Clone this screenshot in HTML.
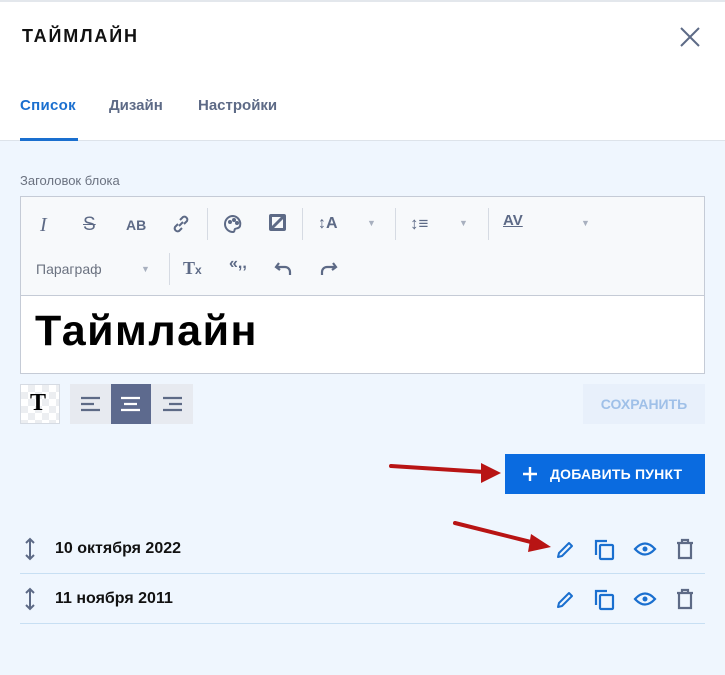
<!DOCTYPE html>
<html><head><meta charset="utf-8"><style>
*{margin:0;padding:0;box-sizing:border-box}
body{width:725px;height:675px;background:#eff6fe;font-family:"Liberation Sans",sans-serif;position:relative;overflow:hidden}
.a{position:absolute}
.hdr{left:0;top:0;width:725px;height:141px;background:#fff;border-top:2px solid #e3e7ec;border-bottom:1px solid #dde3ea}
.tb{font-size:15px;font-weight:bold;color:#5d6a86}
svg{position:absolute}
</style></head><body>
<div class="a hdr"></div>
<div class="a" style="left:22px;top:26px;font-size:18px;font-weight:bold;letter-spacing:1.8px;color:#111">ТАЙМЛАЙН</div>
<svg style="left:679px;top:26px" width="22" height="22"><path d="M2 2L20 20M20 2L2 20" stroke="#5d6a86" stroke-width="2"/></svg>
<div class="a tb" style="left:20px;top:97px;color:#1a6fcf;letter-spacing:0.3px">Список</div>
<div class="a tb" style="left:109px;top:97px">Дизайн</div>
<div class="a tb" style="left:198px;top:97px">Настройки</div>
<div class="a" style="left:20px;top:138px;width:58px;height:3px;background:#1a6fcf"></div>

<div class="a" style="left:20px;top:173px;font-size:13px;color:#6b7280">Заголовок блока</div>
<div class="a" style="left:20px;top:196px;width:685px;height:178px;border:1px solid #c5cbd6;background:#f7f9fb"></div>
<div class="a" style="left:21px;top:295px;width:683px;height:78px;background:#fff;border-top:1px solid #c5cbd6"></div>
<div class="a" style="left:35px;top:307px;font-size:43px;font-weight:bold;color:#000;letter-spacing:1.5px">Таймлайн</div>

<div class="a" style="left:40px;top:214px;font:italic 20px 'Liberation Serif',serif;color:#5d6a86">I</div>
<div class="a" style="left:83px;top:214px;font-size:19px;color:#5d6a86;text-decoration:line-through">S</div>
<div class="a" style="left:126px;top:217px;font-size:14px;font-weight:bold;color:#5d6a86">AB</div>
<svg style="left:170px;top:213px" width="22" height="22" fill="none" stroke="#5d6a86" stroke-width="2"><path d="M9 13l4-4M8 11l-3 3a3 3 0 004 4l3-3M14 11l3-3a3 3 0 00-4-4l-3 3"/></svg>
<div class="a" style="left:207px;top:208px;width:1px;height:32px;background:#d6dbe3"></div>
<svg style="left:222px;top:213px" width="22" height="22" fill="none" stroke="#5d6a86" stroke-width="2"><path d="M11 3a8 8 0 100 16c2 0 1-2 2-3s4 0 5-3a8 8 0 00-7-10z"/><circle cx="8" cy="9" r="1"/><circle cx="12" cy="7" r="1"/><circle cx="15" cy="10" r="1"/></svg>
<svg style="left:268px;top:213px" width="20" height="20"><rect x="1" y="1" width="17" height="17" rx="2" fill="#5d6a86"/><rect x="4" y="4" width="11" height="11" fill="#f7f9fb"/><path d="M4 15L15 4" stroke="#5d6a86" stroke-width="3"/></svg>
<div class="a" style="left:302px;top:208px;width:1px;height:32px;background:#d6dbe3"></div>
<div class="a" style="left:318px;top:215px;font-size:16px;font-weight:bold;color:#5d6a86">↕A</div>
<div class="a" style="left:367px;top:218px;font-size:9px;color:#a8b0bf">▼</div>
<div class="a" style="left:395px;top:208px;width:1px;height:32px;background:#d6dbe3"></div>
<div class="a" style="left:410px;top:214px;font-size:17px;font-weight:bold;color:#5d6a86">↕≡</div>
<div class="a" style="left:459px;top:218px;font-size:9px;color:#a8b0bf">▼</div>
<div class="a" style="left:488px;top:208px;width:1px;height:32px;background:#d6dbe3"></div>
<div class="a" style="left:503px;top:212px;font-size:15px;font-weight:bold;color:#5d6a86;text-decoration:underline">AV</div>
<div class="a" style="left:581px;top:218px;font-size:9px;color:#a8b0bf">▼</div>
<div class="a" style="left:36px;top:261px;font-size:14px;color:#6b7280">Параграф</div>
<div class="a" style="left:141px;top:264px;font-size:9px;color:#a8b0bf">▼</div>
<div class="a" style="left:169px;top:253px;width:1px;height:32px;background:#d6dbe3"></div>
<div class="a" style="left:183px;top:258px;font:bold 18px 'Liberation Serif',serif;color:#5d6a86">T<span style="font-size:12px;font-family:'Liberation Sans'">x</span></div>
<div class="a" style="left:229px;top:255px;font-size:16px;font-weight:bold;color:#5d6a86">«,,</div>
<svg style="left:274px;top:260px" width="20" height="18" fill="none" stroke="#5d6a86" stroke-width="2.2"><path d="M5 3L2 7l4 3M2 7h9a5 5 0 015 5v3"/></svg>
<svg style="left:318px;top:260px" width="20" height="18" fill="none" stroke="#5d6a86" stroke-width="2.2"><path d="M15 3l3 4-4 3M18 7H9a5 5 0 00-5 5v3"/></svg>

<div class="a" style="left:20px;top:384px;width:40px;height:40px;border:1px solid #d6dbe3;background:repeating-conic-gradient(#eceef1 0 25%,#fff 0 50%) 0 0/14px 14px"></div>
<div class="a" style="left:30px;top:390px;font:bold 24px 'Liberation Serif',serif;color:#000">T</div>
<div class="a" style="left:70px;top:384px;width:123px;height:40px;background:#e7eaf0"></div>
<div class="a" style="left:111px;top:384px;width:40px;height:40px;background:#5d6a8e"></div>
<svg style="left:80px;top:395px" width="110" height="20"><g stroke-width="2.2"><path d="M1 3h19M1 9h13M1 15h19" stroke="#5d6a86"/><path d="M41 3h19M44 9h13M41 15h19" stroke="#fff"/><path d="M83 3h19M89 9h13M83 15h19" stroke="#5d6a86"/></g></svg>
<div class="a" style="left:583px;top:384px;width:122px;height:40px;background:#e8f0fb;color:#9fc0e8;font-size:14px;font-weight:bold;text-align:center;line-height:40px">СОХРАНИТЬ</div>

<div class="a" style="left:505px;top:454px;width:200px;height:40px;background:#0a6be0;color:#fff;font-size:14px;font-weight:bold;line-height:40px;padding-left:45px;letter-spacing:0.2px">ДОБАВИТЬ ПУНКТ</div>
<svg style="left:522px;top:466px" width="16" height="16"><path d="M8 1v14M1 8h14" stroke="#fff" stroke-width="2.4"/></svg>

<svg style="left:385px;top:455px" width="170" height="100"><path d="M6 11L100 17" stroke="#b81414" stroke-width="4" stroke-linecap="round"/><path d="M96 8L116 18L96 28Z" fill="#b81414"/><path d="M70 68L150 88" stroke="#b81414" stroke-width="4" stroke-linecap="round"/><path d="M146 79L166 92L143 97Z" fill="#b81414"/></svg>

<div class="a" style="left:20px;top:573px;width:685px;height:1px;background:#c7dff3"></div>
<div class="a" style="left:20px;top:623px;width:685px;height:1px;background:#c7dff3"></div>
<div class="a" style="left:55px;top:540px;font-size:16px;font-weight:bold;color:#111">10 октября 2022</div>
<div class="a" style="left:55px;top:590px;font-size:16px;font-weight:bold;color:#111">11 ноября 2011</div>

<svg style="left:0;top:537px" width="725" height="75">
<defs><g id="r">
<path d="M30 2v20M26 6l4-4 4 4M26 18l4 4 4-4" fill="none" stroke="#5d6a86" stroke-width="2"/>
<path d="M558 20l1-4 10-10 3 3-10 10z" fill="none" stroke="#1a6fcf" stroke-width="2" stroke-linejoin="round"/>
<rect x="600" y="8" width="13" height="14" rx="1" fill="none" stroke="#1a6fcf" stroke-width="2.2"/><path d="M596 18V4h11" fill="none" stroke="#1a6fcf" stroke-width="2.2"/>
<path d="M635 12q10-11 20 0q-10 11-20 0z" fill="none" stroke="#1a6fcf" stroke-width="2.2"/><circle cx="645" cy="12" r="2.5" fill="#1a6fcf"/>
<path d="M677 6h16M682 6V3h6v3M679 6v15h12V6" fill="none" stroke="#5d6a86" stroke-width="2.2"/>
</g></defs>
<use href="#r"/><use href="#r" y="50"/>
</svg>
</body></html>
